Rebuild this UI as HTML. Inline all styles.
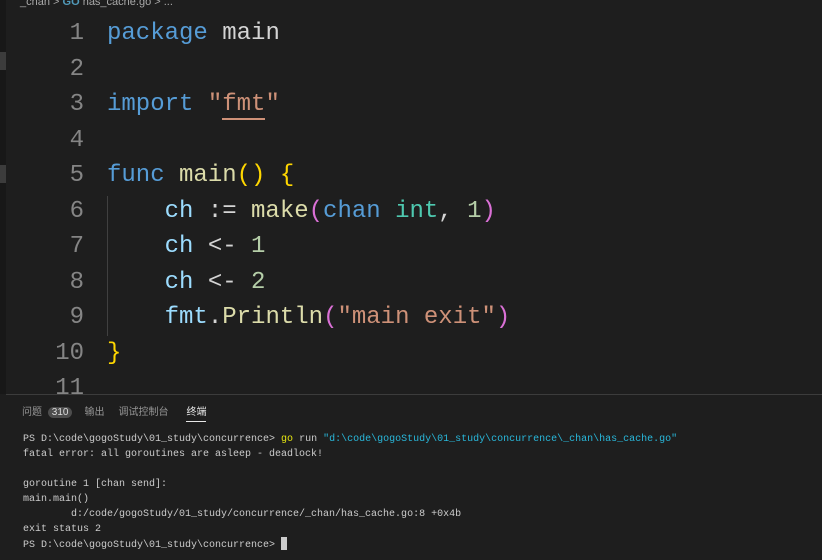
<!DOCTYPE html>
<html><head><style>
body{margin:0;width:822px;height:559px;background:#1e1e1e;overflow:hidden;position:relative;font-family:"Liberation Mono",monospace}
.strip{position:absolute;left:0;top:0;width:6px;height:394px;background:#181818}
.bc{position:absolute;left:20px;top:-4px;font:11px "Liberation Sans",sans-serif;color:#a9a9a9;white-space:pre}
.ln{position:absolute;left:0;width:84px;text-align:right;color:#858585;font-size:24px}
.cd{position:absolute;left:107px;font-size:24px;color:#d4d4d4;white-space:pre}
.k{color:#569cd6}.f{color:#dcdcaa}.s{color:#ce9178}.v{color:#9cdcfe}.n{color:#b5cea8}.t{color:#4ec9b0}.y{color:#ffd700}.p{color:#da70d6}
.panel{position:absolute;left:6px;top:394px;width:816px;height:165px;background:#1e1e1e;border-top:1px solid #3c3c3c}
.tabs{position:absolute;top:8px;left:16px;font:10px "Liberation Sans","Noto Sans CJK SC",sans-serif;color:#969696}
.term{position:absolute;left:17px;top:37px;font-size:10px;line-height:15px;color:#cccccc;white-space:pre}
</style></head><body>
<div class="strip"><div style="position:absolute;top:52px;height:18px;width:6px;background:#3c3c3c"></div><div style="position:absolute;top:165px;height:18px;width:6px;background:#3c3c3c"></div></div>
<div class="bc">_chan &gt; <span style="color:#519aba;font-weight:bold">GO</span> has_cache.go &gt; ...</div>
<div style="position:absolute;left:107px;top:196px;width:1px;height:140px;background:#404040"></div>
<div class="ln" style="top:20px">1</div><div class="cd" style="top:20px"><span class="k">package</span> main</div>
<div class="ln" style="top:56px">2</div>
<div class="ln" style="top:91px">3</div><div class="cd" style="top:91px"><span class="k">import</span> <span class="s">"<span style="border-bottom:2px solid #ce9178">fmt</span>"</span></div>
<div class="ln" style="top:127px">4</div>
<div class="ln" style="top:162px">5</div><div class="cd" style="top:162px"><span class="k">func</span> <span class="f">main</span><span class="y">()</span> <span class="y">{</span></div>
<div class="ln" style="top:198px">6</div><div class="cd" style="top:198px">    <span class="v">ch</span> := <span class="f">make</span><span class="p">(</span><span class="k">chan</span> <span class="t">int</span>, <span class="n">1</span><span class="p">)</span></div>
<div class="ln" style="top:233px">7</div><div class="cd" style="top:233px">    <span class="v">ch</span> &lt;- <span class="n">1</span></div>
<div class="ln" style="top:269px">8</div><div class="cd" style="top:269px">    <span class="v">ch</span> &lt;- <span class="n">2</span></div>
<div class="ln" style="top:304px">9</div><div class="cd" style="top:304px">    <span class="v">fmt</span>.<span class="f">Println</span><span class="p">(</span><span class="s">"main exit"</span><span class="p">)</span></div>
<div class="ln" style="top:340px">10</div><div class="cd" style="top:340px"><span class="y">}</span></div>
<div class="ln" style="top:375px">11</div>
<div class="panel">
<div class="tabs"><span>问题</span> <span style="display:inline-block;background:#4d4d4d;color:#ddd;border-radius:8px;padding:0 4px;margin:0 12px 0 3px">310</span><span style="margin-right:14px">输出</span><span style="margin-right:18px">调试控制台</span><span style="color:#e7e7e7;border-bottom:1px solid #e7e7e7;padding-bottom:3px">终端</span></div>
<div class="term">PS D:\code\gogoStudy\01_study\concurrence&gt; <span style="color:#e5e510">go</span> run <span style="color:#29b8db">"d:\code\gogoStudy\01_study\concurrence\_chan\has_cache.go"</span>
fatal error: all goroutines are asleep - deadlock!

goroutine 1 [chan send]:
main.main()
        d:/code/gogoStudy/01_study/concurrence/_chan/has_cache.go:8 +0x4b
exit status 2
PS D:\code\gogoStudy\01_study\concurrence&gt; <span style="display:inline-block;width:6px;height:13px;background:#ccc;vertical-align:-3px;line-height:0"></span></div>
</div>
</body></html>
